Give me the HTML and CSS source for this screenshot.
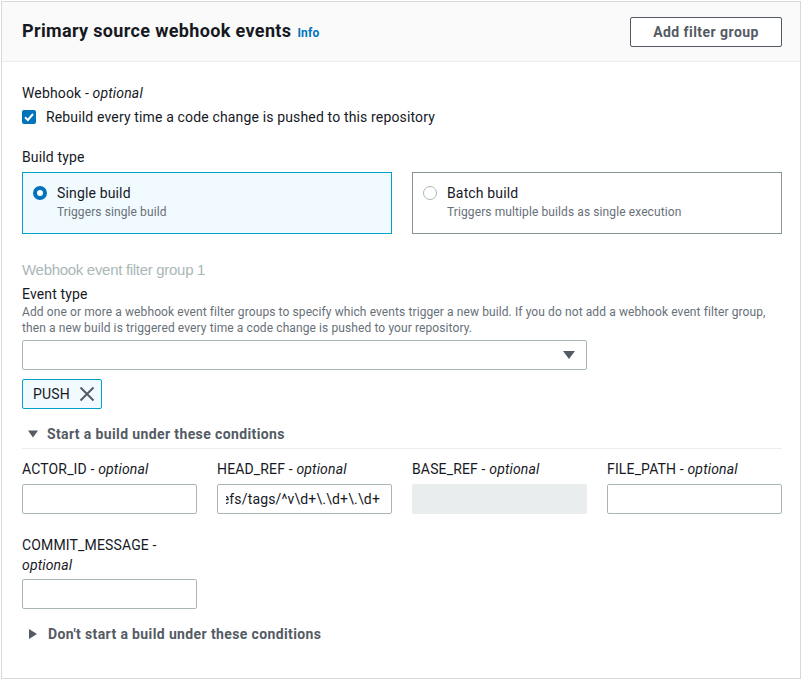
FILE: index.html
```html
<!DOCTYPE html>
<html>
<head>
<meta charset="utf-8">
<link rel="stylesheet" href="styles.css">
</head>
<body>
<div class="panel">
  <div class="panel-header">
    <div class="title-wrap">
      <h2 class="title">Primary source webhook events</h2>
      <a class="info">Info</a>
    </div>
    <button class="btn">Add filter group</button>
  </div>
  <div class="panel-body">
    <div class="label">Webhook - <i>optional</i></div>
    <div class="checkbox-row">
      <svg class="checkbox" width="14" height="14" viewBox="0 0 14 14"><rect x="0" y="0" width="14" height="14" rx="2" fill="#0073bb"/><polyline points="3,7.2 5.9,10 11,4" fill="none" stroke="#fff" stroke-width="2"/></svg>
      <span>Rebuild every time a code change is pushed to this repository</span>
    </div>

    <div class="label build-type">Build type</div>
    <div class="tiles">
      <div class="tile selected">
        <svg class="radio" width="14" height="14" viewBox="0 0 14 14"><circle cx="7" cy="7" r="5" fill="#fff" stroke="#0073bb" stroke-width="4"/></svg>
        <div class="tile-text">
          <div class="tile-title">Single build</div>
          <div class="tile-desc">Triggers single build</div>
        </div>
      </div>
      <div class="tile">
        <svg class="radio" width="14" height="14" viewBox="0 0 14 14"><circle cx="7" cy="7" r="6.5" fill="#fff" stroke="#aab7b8" stroke-width="1"/></svg>
        <div class="tile-text">
          <div class="tile-title">Batch build</div>
          <div class="tile-desc">Triggers multiple builds as single execution</div>
        </div>
      </div>
    </div>

    <div class="group-heading">Webhook event filter group 1</div>
    <div class="label event-type">Event type</div>
    <div class="desc">Add one or more a webhook event filter groups to specify which events trigger a new build. If you do not add a webhook event filter group, then a new build is triggered every time a code change is pushed to your repository.</div>
    <div class="select">
      <svg width="12" height="8" viewBox="0 0 12 8"><polygon points="0,0 12,0 6,8" fill="#545b64"/></svg>
    </div>
    <div class="token">
      <span>PUSH</span>
      <svg width="16" height="16" viewBox="0 0 16 16"><path d="M1.5 1.5 L14.5 14.5 M14.5 1.5 L1.5 14.5" stroke="#545b64" stroke-width="2" fill="none"/></svg>
    </div>

    <div class="expand open">
      <svg width="10" height="8" viewBox="0 0 10 8"><polygon points="0,0.5 10,0.5 5,7.5" fill="#545b64"/></svg>
      <span>Start a build under these conditions</span>
    </div>
    <div class="fields">
      <div class="field">
        <div class="flabel">ACTOR_ID - <i>optional</i></div>
        <div class="input"></div>
      </div>
      <div class="field">
        <div class="flabel">HEAD_REF - <i>optional</i></div>
        <div class="input"><div class="clip"><span>refs/tags/^v\d+\.\d+\.\d+</span></div></div>
      </div>
      <div class="field">
        <div class="flabel">BASE_REF - <i>optional</i></div>
        <div class="input disabled"></div>
      </div>
      <div class="field">
        <div class="flabel">FILE_PATH - <i>optional</i></div>
        <div class="input"></div>
      </div>
      <div class="field">
        <div class="flabel">COMMIT_MESSAGE - <i>optional</i></div>
        <div class="input"></div>
      </div>
    </div>
    <div class="expand closed">
      <svg width="10" height="10" viewBox="0 0 10 10"><polygon points="1,0 9,5 1,10" fill="#545b64"/></svg>
      <span>Don't start a build under these conditions</span>
    </div>
  </div>
</div>
</body>
</html>
```

FILE: styles.css
```css
* { box-sizing: border-box; }
html, body { margin: 0; padding: 0; background: #fff; }
body {
  font-family: Roboto, "Liberation Sans", Arial, sans-serif;
  font-size: 14px;
  line-height: 22px;
  letter-spacing: 0.15px;
  color: #16191f;
}
.panel {
  margin: 1px 2px 0 1px;
  border: 1px solid #d5dbdb;
  background: #fff;
}
.panel-header {
  background: #fafafa;
  border-bottom: 1px solid #eaeded;
  padding: 15px 18px 14px 20px;
  display: flex;
  align-items: center;
  justify-content: space-between;
}
.title-wrap { display: flex; align-items: baseline; gap: 6px; }
.title {
  margin: 0;
  font-size: 18px;
  line-height: 22px;
  font-weight: 700;
  letter-spacing: 0.35px;
  color: #16191f;
}
.info {
  font-size: 12px;
  font-weight: 700;
  color: #0073bb;
}
.btn {
  font-family: inherit;
  font-size: 14px;
  font-weight: 700;
  line-height: 20px;
  letter-spacing: 0.45px;
  color: #545b64;
  background: #fff;
  border: 1px solid #545b64;
  border-radius: 2px;
  padding: 4px 10px;
  height: 30px;
  width: 152px;
}
.panel-body {
  padding: 20px 18px 33px 20px;
}
.label { line-height: 22px; }
.checkbox-row {
  margin-top: 2px;
  display: flex;
  align-items: center;
  gap: 10px;
}
.checkbox { flex: none; }
.build-type { margin-top: 18px; }
.tiles {
  margin-top: 4px;
  display: grid;
  grid-template-columns: 1fr 1fr;
  gap: 20px;
}
.tile {
  border: 1px solid #879596;
  padding: 9px 14px 13px 10px;
  display: flex;
  align-items: flex-start;
  gap: 10px;
}
.tile.selected {
  background: #f1faff;
  border-color: #00a1c9;
}
.radio { flex: none; margin-top: 4px; }
.tile-title { line-height: 22px; }
.tile-desc { font-size: 12px; line-height: 16px; letter-spacing: 0.1px; color: #687078; }
.group-heading {
  margin-top: 25px;
  font-family: "Liberation Sans", Arial, sans-serif;
  font-size: 15px;
  letter-spacing: -0.3px;
  line-height: 22px;
  color: #aab7b8;
}
.event-type { margin-top: 3px; line-height: 20px; }
.desc {
  font-size: 12px;
  line-height: 16px;
  letter-spacing: 0.1px;
  color: #687078;
}
.select {
  margin-top: 4px;
  width: 565px;
  height: 30px;
  border: 1px solid #aab7b8;
  border-radius: 2px;
  display: flex;
  align-items: center;
  justify-content: flex-end;
  padding-right: 11px;
}
.token {
  margin-top: 9px;
  width: 80px;
  height: 30px;
  background: #f1faff;
  border: 1px solid #00a1c9;
  border-radius: 2px;
  display: flex;
  align-items: center;
  padding-left: 10px;
  gap: 9px;
  color: #16191f;
}
.expand {
  margin-top: 14px;
  display: flex;
  align-items: center;
  font-weight: 700;
  color: #545b64;
  line-height: 22px;
  letter-spacing: 0.38px;
}
.expand svg { flex: none; margin-left: 6px; margin-right: 9px; }
.expand.open {
  padding-bottom: 3px;
  border-bottom: 1px solid #eaeded;
}
.expand.closed svg { margin-left: 6px; margin-right: 10px; }
.fields {
  margin-top: 10px;
  display: grid;
  grid-template-columns: repeat(4, 175px);
  column-gap: 20px;
  row-gap: 21px;
}
.flabel { line-height: 20px; margin-bottom: 5px; }
.field:nth-child(5) .flabel { margin-bottom: 4px; }
.input {
  height: 30px;
  border: 1px solid #aab7b8;
  border-radius: 2px;
  background: #fff;
  padding: 0 11px 0 8px;
  display: flex;
  align-items: center;
}
.input.disabled {
  background: #eaeded;
  border-color: #eaeded;
}
.clip {
  flex: 1;
  overflow: hidden;
  display: flex;
  justify-content: flex-end;
  white-space: nowrap;
}
.clip span { flex: none; }
```
